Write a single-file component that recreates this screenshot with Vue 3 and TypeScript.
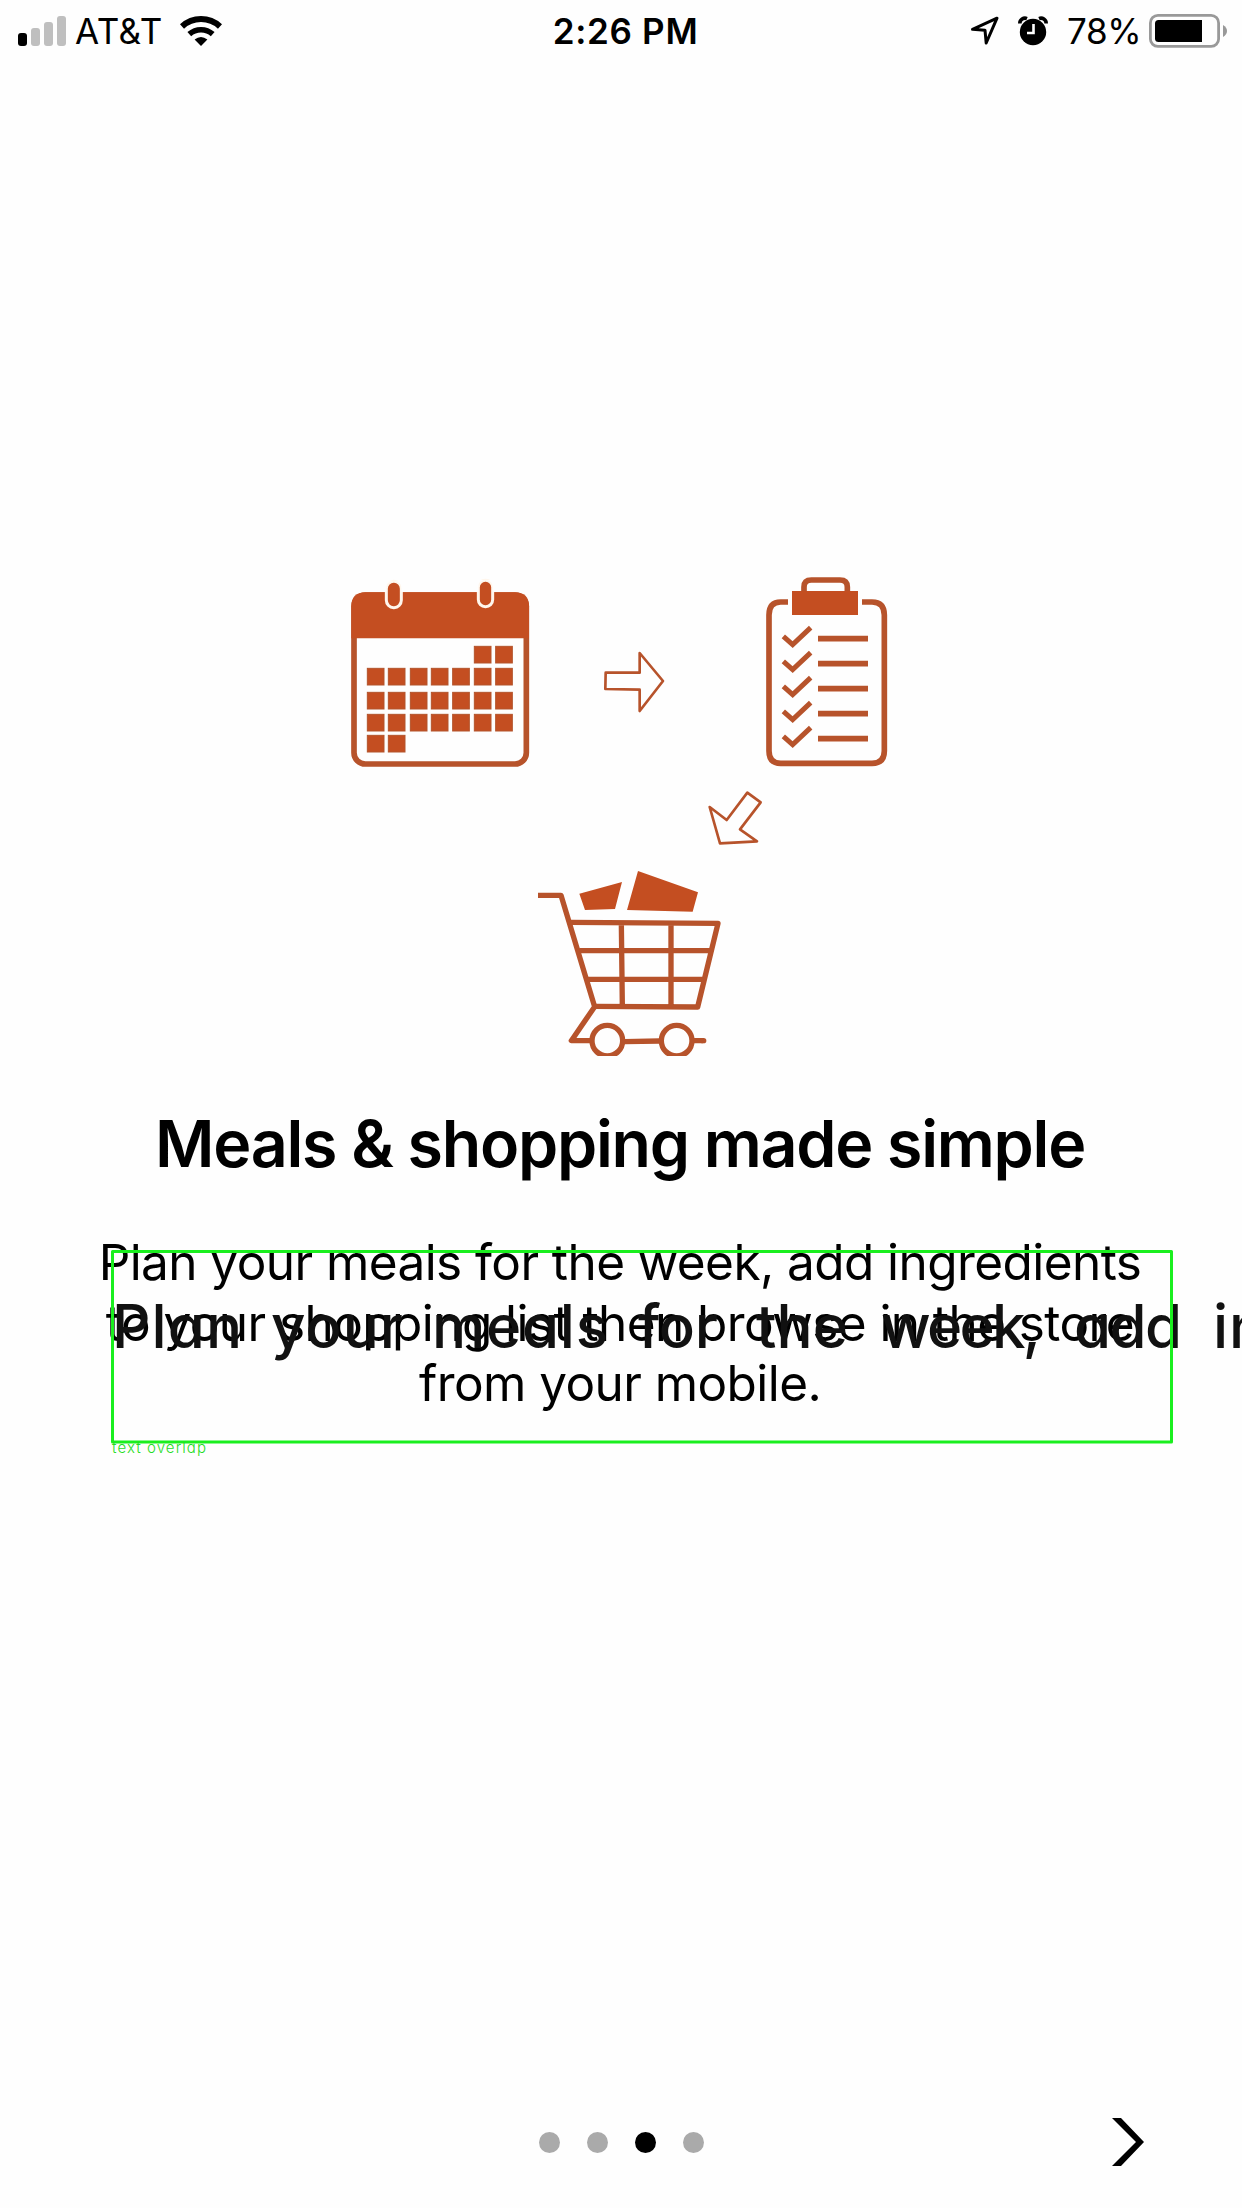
<script setup lang="ts">
interface Word {
  text: string
  x: number
  length: number
}

const cells: [number, number][] = []
const columns = [81, 144, 210, 273, 337, 402, 466]
const rows: [number, number, number][] = [
  [228, 5, 7],
  [294, 0, 7],
  [366, 0, 7],
  [432, 0, 7],
  [495, 0, 2],
]
for (const [y, from, to] of rows) {
  for (const x of columns.slice(from, to)) cells.push([x, y])
}

const checks = [0, 75, 150, 225, 300]

const noteWords: Word[] = [
  { text: 'Plan', x: 112, length: 130 },
  { text: 'your', x: 271, length: 132 },
  { text: 'meals', x: 432, length: 176 },
  { text: 'for', x: 638, length: 80 },
  { text: 'the', x: 756, length: 92 },
  { text: 'week,', x: 881, length: 160 },
  { text: 'add', x: 1074, length: 108 },
  { text: 'in', x: 1213, length: 52 },
]

const pages = [0, 1, 2, 3]
const currentPage = 2
</script>

<template>
  <div class="screen">
    <header class="status">
      <div class="side">
        <svg class="signal" width="48" height="30" viewBox="0 0 48 30">
          <rect x="0" y="17" width="9" height="13" rx="3" fill="#000" />
          <rect x="13" y="12" width="9" height="18" rx="3" fill="#bfbfbf" />
          <rect x="26" y="6" width="9" height="24" rx="3" fill="#bfbfbf" />
          <rect x="39" y="0" width="9" height="30" rx="3" fill="#bfbfbf" />
        </svg>
        <span class="carrier">AT&amp;T</span>
        <svg class="wifi" width="42" height="30" viewBox="0 0 42 30">
          <path d="M2 10.5A28 28 0 0 1 40 10.5" fill="none" stroke="#000" stroke-width="6" />
          <path d="M9.3 18.2A17.5 17.5 0 0 1 32.7 18.2" fill="none" stroke="#000" stroke-width="5.6" />
          <path d="M14.6 23.4Q21 18.4 27.4 23.4L21 30Z" />
        </svg>
      </div>
      <span class="clock">2:26 PM</span>
      <div class="side end">
        <svg class="location" width="30" height="30" viewBox="0 0 30 30">
          <path d="M2.5 13.3L27 2.2L16.2 27L15 14.2Z" fill="none" stroke="#000" stroke-width="3" stroke-linejoin="round" />
        </svg>
        <svg class="alarm" width="30" height="30" viewBox="0 0 30 30">
          <circle cx="15" cy="16" r="13.2" />
          <path d="M1.8 7.4A5.2 5.2 0 0 1 9 2.6M28.2 7.4A5.2 5.2 0 0 0 21 2.6" fill="none" stroke="#000" stroke-width="3.6" />
          <path d="M15.5 8V17H9" fill="none" stroke="#fff" stroke-width="2.6" />
        </svg>
        <span class="percent">78%</span>
        <svg class="battery" width="79" height="34" viewBox="0 0 79 34">
          <rect x="1.4" y="1.4" width="68.2" height="31" rx="7.5" fill="none" stroke="#999" stroke-width="2.8" />
          <path d="M9.500 6H53V28H9.500A3.500 3.500 0 0 1 6 24.500V9.500A3.500 3.500 0 0 1 9.500 6Z" />
          <path d="M74 11Q78 13.500 78 17T74 23Z" fill="#999" />
        </svg>
      </div>
    </header>

    <main class="content">
      <svg class="illustration" width="560" height="505" viewBox="0 0 1680 1515" fill="none" stroke="#b7532b">
        <defs>
          <clipPath id="ground">
            <rect x="0" y="0" width="600" height="588" />
          </clipPath>
        </defs>

        <!-- calendar -->
        <g transform="translate(0 15)">
          <rect x="42" y="75" width="517" height="507" rx="34" stroke-width="17" />
          <path d="M34 205V109Q34 67 76 67H525Q567 67 567 109V205Z" fill="#c44e21" stroke="none" />
          <g fill="#c44e21" stroke="#fff6ec" stroke-width="9">
            <rect x="139" y="34" width="45" height="79" rx="22" />
            <rect x="415" y="31" width="43" height="79" rx="21" />
          </g>
          <path d="M130 34H192V66H184V55Q184 34 161 34T139 55V66H130ZM406 30H466V66H458V52Q458 31 436 31T415 52V66H406Z" fill="#fefefe" stroke="none" />
          <rect v-for="([x, y], i) in cells" :key="i" :x="x + 1" :y="y + 1" width="50" height="50" fill="#c44e21" stroke="#b3542c" stroke-width="3" />
        </g>

        <!-- arrow to the list -->
        <path transform="translate(750 195)" d="M47 128H149V69L219 153L149 243V179L46 177Z" stroke-width="8" stroke-linejoin="round" />

        <!-- shopping list -->
        <g transform="translate(1230 0)" stroke-width="17">
          <path d="M114 111H92Q57 111 57 150V558Q57 595 92 595H366Q403 595 403 558V150Q403 111 366 111H336" />
          <path d="M162 80V66Q162 45 184 45H270Q292 45 292 66V80" />
          <rect x="126" y="78" width="198" height="72" fill="#c44e21" stroke="none" />
          <g v-for="y in checks" :key="y" :transform="`translate(0 ${y})`">
            <path d="M100 214L128 239L182 188" stroke-width="15" />
            <path d="M204 221H354" />
          </g>
        </g>

        <!-- arrow to the cart -->
        <path transform="translate(1050 645)" d="M59 81L110 120L172 38L212 67L150 148L201 184L90 190Z" stroke-width="8" stroke-linejoin="round" />

        <!-- cart -->
        <g transform="translate(570 885)" stroke-width="16">
          <path d="M148 101L276 66L255 147L165 150ZM324 33L504 97L488 155L291 150Z" fill="#c44e21" stroke="none" />
          <path d="M24 106H93L194 440L124 542H182M284 545L388 543M490 542H520" stroke-linejoin="round" />
          <path d="M518 542H521" stroke-linecap="round" />
          <path d="M120 187L564 190L503 441L194 439M148 272H545M174 358H524M274 190L277 438M423 190V438" stroke-linejoin="round" />
          <g clip-path="url(#ground)">
            <circle cx="232" cy="542" r="46" />
            <circle cx="440" cy="542" r="46" />
          </g>
        </g>
      </svg>

      <h1 class="title">Meals &amp; shopping made simple</h1>
      <p class="body">
        <span class="line">Plan your meals for the week, add ingredients</span>
        <span class="line">to your shopping list then browse in the store</span>
        <span class="line">from your mobile.</span>
      </p>
    </main>

    <footer class="pager">
      <div class="dots">
        <i v-for="page in pages" :key="page" :class="{ active: page === currentPage }"></i>
      </div>
      <svg class="next" width="32" height="48" viewBox="0 0 32 48">
        <path d="M0 0H9L32 24L9 48H0L24 24Z" />
      </svg>
    </footer>

    <!-- annotation drawn over the paragraph -->
    <svg class="annotation" width="1242" height="240" viewBox="0 1230 1242 240">
      <text class="note" y="1348">
        <tspan v-for="word in noteWords" :key="word.text" :x="word.x" :textLength="word.length">{{ word.text }}</tspan>
      </text>
      <rect x="112.500" y="1251.500" width="1059" height="190.500" fill="none" stroke="#1aef1e" stroke-width="3" stroke-linejoin="round" />
      <text class="tag" x="112" y="1453" textLength="94">text overlap</text>
    </svg>
  </div>
</template>

<style>
body {
  margin: 0;
  background: #fefefe;
}
</style>

<style scoped>
.screen {
  position: relative;
  display: flex;
  flex-direction: column;
  width: 1242px;
  height: 2208px;
  overflow: hidden;
  background: #fefefe;
  color: #000;
  font-family: Inter, "Liberation Sans", sans-serif;
}

.status {
  display: flex;
  align-items: center;
  height: 62px;
  padding: 0 14px 0 18px;
  font-size: 35px;
  line-height: 62px;
  white-space: nowrap;
}

.side {
  display: flex;
  flex: 1;
  align-items: center;
}

.end {
  justify-content: flex-end;
}

.carrier {
  width: 87px;
  margin-left: 9px;
  letter-spacing: 0.5px;
}

.wifi {
  margin-left: 18px;
}

.clock {
  margin-left: 5px;
  font-weight: 600;
  letter-spacing: 0.7px;
}

.alarm {
  margin-left: 18px;
}

.percent {
  margin-left: 19px;
  width: 73px;
  letter-spacing: -0.3px;
}

.battery {
  margin-left: 9px;
}

.content {
  display: flex;
  flex: 1;
  flex-direction: column;
  align-items: center;
  padding: 503px 2px 0 0;
}

.illustration {
  display: block;
}

.title {
  margin: 34px 0 0;
  font-size: 64.5px;
  font-weight: 600;
  line-height: 80px;
  letter-spacing: -1.28px;
  white-space: nowrap;
}

.body {
  display: flex;
  flex-direction: column;
  align-items: center;
  margin: 48px 0 0;
  font-size: 49.5px;
  line-height: 60.5px;
  white-space: nowrap;
}

.line {
  letter-spacing: -0.57px;
}

.pager {
  display: flex;
  align-items: center;
  justify-content: space-between;
  height: 48px;
  padding: 0 98px 42px 539px;
}

.dots {
  display: flex;
  gap: 27px;
}

.dots i {
  width: 21px;
  height: 21px;
  border-radius: 50%;
  background: #aaa;
}

.dots i.active {
  background: #000;
}

.annotation {
  position: absolute;
  top: 1230px;
  left: 0;
}

.note {
  fill: #111;
  font-size: 60px;
  font-weight: 500;
  font-feature-settings: "cv11";
}

.tag {
  fill: #1fdc23;
  font-size: 15px;
  font-weight: 300;
  font-feature-settings: "cv11";
}
</style>
